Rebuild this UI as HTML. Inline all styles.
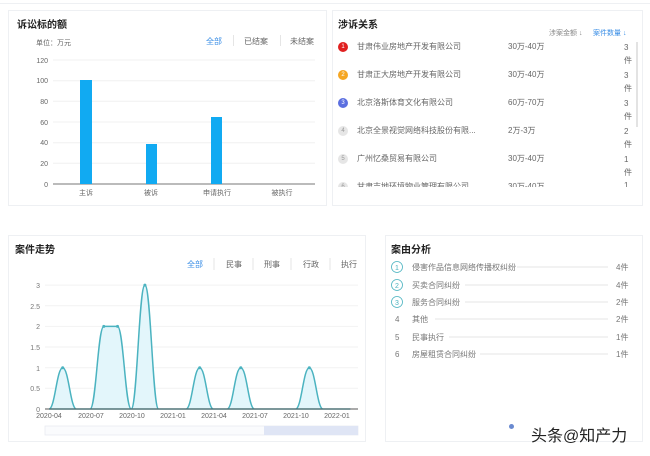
<!DOCTYPE html>
<html><head><meta charset="utf-8"><style>
*{margin:0;padding:0;box-sizing:border-box}
body{width:650px;height:456px;background:#fff;font-family:"Liberation Sans","Noto Sans CJK SC",sans-serif;position:relative;overflow:hidden;color:#555}
.p{position:absolute;border:1px solid #eef0f3;background:#fff}
.t{position:absolute;font-size:10px;font-weight:bold;color:#222}
.s{position:absolute;font-size:8px;color:#666;white-space:nowrap}
.b{color:#3a8ee6}
</style></head><body>
<div style="position:absolute;left:0;top:0;width:650px;height:4px;border-bottom:1px solid #eef0f3"></div>
<div class="p" style="left:8px;top:10px;width:319px;height:196px"></div>
<div class="p" style="left:332px;top:10px;width:311px;height:196px"></div>
<div class="p" style="left:8px;top:235px;width:358px;height:207px"></div>
<div class="p" style="left:385px;top:235px;width:258px;height:207px"></div>

<div class="t" style="left:17px;top:16px">诉讼标的额</div>
<div class="s" style="left:36px;top:38px;font-size:7px">单位：万元</div>
<div class="s b" style="left:206px;top:36px">全部</div>
<div class="s" style="left:244px;top:36px">已结案</div>
<div class="s" style="left:290px;top:36px">未结案</div>
<div style="position:absolute;left:233px;top:35px;width:1px;height:11px;background:#e5e5e5"></div>
<div style="position:absolute;left:280px;top:35px;width:1px;height:11px;background:#e5e5e5"></div>
<svg style="position:absolute;left:0;top:0" width="330" height="210">
<g stroke="#f0f0f0" stroke-width="1"><line x1="53" x2="315" y1="60" y2="60"/><line x1="53" x2="315" y1="80.7" y2="80.7"/><line x1="53" x2="315" y1="101.3" y2="101.3"/><line x1="53" x2="315" y1="122" y2="122"/><line x1="53" x2="315" y1="142.7" y2="142.7"/><line x1="53" x2="315" y1="163.3" y2="163.3"/></g>
<line x1="53" x2="315" y1="184" y2="184" stroke="#777"/>
<g font-size="7" fill="#666" text-anchor="end" font-family="Liberation Sans"><text x="48" y="63">120</text><text x="48" y="83">100</text><text x="48" y="104">80</text><text x="48" y="125">60</text><text x="48" y="145">40</text><text x="48" y="166">20</text><text x="48" y="187">0</text></g>
<rect x="80" y="80" width="12" height="104" fill="#11aaf2"/>
<rect x="146" y="144" width="11" height="40" fill="#11aaf2"/>
<rect x="211" y="117" width="11" height="67" fill="#11aaf2"/>
<g font-size="7" fill="#666" text-anchor="middle" font-family="Liberation Sans,Noto Sans CJK SC"><text x="86" y="195">主诉</text><text x="151" y="195">被诉</text><text x="217" y="195">申请执行</text><text x="282" y="195">被执行</text></g>
</svg>

<div class="t" style="left:338px;top:16px">涉诉关系</div>
<div class="s" style="left:549px;top:28px;font-size:7px;color:#888">涉案金额 ↓</div>
<div class="s b" style="left:593px;top:28px;font-size:7px">案件数量 ↓</div>
<div style="position:absolute;left:636px;top:42px;width:2px;height:85px;background:#e3e3e3"></div>
<div style="position:absolute;left:338px;top:40px;width:296px;height:147px;overflow:hidden">
<div style="position:relative;height:28px"><span style="position:absolute;left:0;top:2px;width:10px;height:10px;border-radius:50%;background:#e02020;color:#fff;font-size:6px;text-align:center;line-height:10px">1</span><span class="s" style="left:19px;top:1px">甘肃伟业房地产开发有限公司</span><span class="s" style="left:170px;top:1px">30万-40万</span><span class="s" style="left:286px;top:1px;line-height:13px">3<br>件</span></div>
<div style="position:relative;height:28px"><span style="position:absolute;left:0;top:2px;width:10px;height:10px;border-radius:50%;background:#f5a623;color:#fff;font-size:6px;text-align:center;line-height:10px">2</span><span class="s" style="left:19px;top:1px">甘肃正大房地产开发有限公司</span><span class="s" style="left:170px;top:1px">30万-40万</span><span class="s" style="left:286px;top:1px;line-height:13px">3<br>件</span></div>
<div style="position:relative;height:28px"><span style="position:absolute;left:0;top:2px;width:10px;height:10px;border-radius:50%;background:#5b6fe0;color:#fff;font-size:6px;text-align:center;line-height:10px">3</span><span class="s" style="left:19px;top:1px">北京洛斯体育文化有限公司</span><span class="s" style="left:170px;top:1px">60万-70万</span><span class="s" style="left:286px;top:1px;line-height:13px">3<br>件</span></div>
<div style="position:relative;height:28px"><span style="position:absolute;left:0;top:2px;width:10px;height:10px;border-radius:50%;background:#e6e6e6;color:#999;font-size:6px;text-align:center;line-height:10px">4</span><span class="s" style="left:19px;top:1px">北京全景视觉网络科技股份有限...</span><span class="s" style="left:170px;top:1px">2万-3万</span><span class="s" style="left:286px;top:1px;line-height:13px">2<br>件</span></div>
<div style="position:relative;height:28px"><span style="position:absolute;left:0;top:2px;width:10px;height:10px;border-radius:50%;background:#e6e6e6;color:#999;font-size:6px;text-align:center;line-height:10px">5</span><span class="s" style="left:19px;top:1px">广州忆桑贸易有限公司</span><span class="s" style="left:170px;top:1px">30万-40万</span><span class="s" style="left:286px;top:1px;line-height:13px">1<br>件</span></div>
<div style="position:relative;height:28px"><span style="position:absolute;left:0;top:2px;width:10px;height:10px;border-radius:50%;background:#e6e6e6;color:#999;font-size:6px;text-align:center;line-height:10px">6</span><span class="s" style="left:19px;top:1px">甘肃吉地环境物业管理有限公司</span><span class="s" style="left:170px;top:1px">30万-40万</span><span class="s" style="left:286px;top:1px">1</span></div>
</div>

<div class="t" style="left:15px;top:241px">案件走势</div>
<div class="s b" style="left:187px;top:259px">全部</div>
<div class="s" style="left:226px;top:259px">民事</div>
<div class="s" style="left:264px;top:259px">刑事</div>
<div class="s" style="left:303px;top:259px">行政</div>
<div class="s" style="left:341px;top:259px">执行</div>
<svg style="position:absolute;left:0;top:0" width="370" height="456">
<g stroke="#e5e5e5"><line x1="214" x2="214" y1="258" y2="270"/><line x1="253" x2="253" y1="258" y2="270"/><line x1="291" x2="291" y1="258" y2="270"/><line x1="330" x2="330" y1="258" y2="270"/></g>
<g stroke="#f2f2f2"><line x1="45" x2="358" y1="285.1" y2="285.1"/><line x1="45" x2="358" y1="305.7" y2="305.7"/><line x1="45" x2="358" y1="326.4" y2="326.4"/><line x1="45" x2="358" y1="347" y2="347"/><line x1="45" x2="358" y1="367.7" y2="367.7"/><line x1="45" x2="358" y1="388.3" y2="388.3"/></g>
<g font-size="7" fill="#777" text-anchor="end" font-family="Liberation Sans"><text x="40" y="288">3</text><text x="40" y="309">2.5</text><text x="40" y="329">2</text><text x="40" y="350">1.5</text><text x="40" y="371">1</text><text x="40" y="391">0.5</text><text x="40" y="412">0</text></g>
<path d="M49,409 C55,409 56.7,367.7 62.7,367.7 C68.7,367.7 70.4,409 76.4,409 L90.1,409 C96.1,409 97.8,326.4 103.8,326.4 L117.5,326.4 C123.5,326.4 125.2,409 131.2,409 C137.2,409 138.9,285.1 144.9,285.1 C150.9,285.1 152.6,409 158.6,409 L186,409 C192,409 193.7,367.7 199.7,367.7 C205.7,367.7 207.4,409 213.4,409 L227.1,409 C233.1,409 234.8,367.7 240.8,367.7 C246.8,367.7 248.5,409 254.5,409 L295.6,409 C301.6,409 303.3,367.7 309.3,367.7 C315.3,367.7 317,409 323,409 L350.4,409 Z" fill="#e3f6fb" stroke="#4bb3c0" stroke-width="1.5"/>
<line x1="45" x2="358" y1="409" y2="409" stroke="#555"/>
<g fill="#4bb3c0"><circle cx="62.7" cy="367.7" r="1.5"/><circle cx="103.8" cy="326.4" r="1.5"/><circle cx="117.5" cy="326.4" r="1.5"/><circle cx="144.9" cy="285.1" r="1.5"/><circle cx="199.7" cy="367.7" r="1.5"/><circle cx="240.8" cy="367.7" r="1.5"/><circle cx="309.3" cy="367.7" r="1.5"/></g>
<g font-size="7" fill="#666" text-anchor="middle" font-family="Liberation Sans"><text x="49" y="418">2020-04</text><text x="91" y="418">2020-07</text><text x="132" y="418">2020-10</text><text x="173" y="418">2021-01</text><text x="214" y="418">2021-04</text><text x="255" y="418">2021-07</text><text x="296" y="418">2021-10</text><text x="337" y="418">2022-01</text></g>
<rect x="45" y="426" width="313" height="9" fill="#fafbfd" stroke="#e6e8ef" stroke-width="0.7"/>
<rect x="264" y="426" width="94" height="9" fill="#dfe5f5"/>
</svg>

<div class="t" style="left:391px;top:241px">案由分析</div>
<svg style="position:absolute;left:385px;top:255px" width="258" height="110">
<g font-size="8" font-family="Liberation Sans,Noto Sans CJK SC" fill="#777">
<circle cx="12" cy="12" r="5.5" fill="none" stroke="#4bb3c0" stroke-width="0.8"/><text x="12" y="15" text-anchor="middle" fill="#4bb3c0" font-size="7">1</text>
<text x="27" y="15">侵害作品信息网络传播权纠纷</text><line x1="132" x2="223" y1="12" y2="12" stroke="#ccc" stroke-width="0.6"/><text x="231" y="15">4件</text>
<circle cx="12" cy="30" r="5.5" fill="none" stroke="#4bb3c0" stroke-width="0.8"/><text x="12" y="33" text-anchor="middle" fill="#4bb3c0" font-size="7">2</text>
<text x="27" y="33">买卖合同纠纷</text><line x1="80" x2="223" y1="30" y2="30" stroke="#ccc" stroke-width="0.6"/><text x="231" y="33">4件</text>
<circle cx="12" cy="47" r="5.5" fill="none" stroke="#4bb3c0" stroke-width="0.8"/><text x="12" y="50" text-anchor="middle" fill="#4bb3c0" font-size="7">3</text>
<text x="27" y="50">服务合同纠纷</text><line x1="80" x2="223" y1="47" y2="47" stroke="#ccc" stroke-width="0.6"/><text x="231" y="50">2件</text>
<text x="10" y="67">4</text><text x="27" y="67">其他</text><line x1="50" x2="223" y1="64" y2="64" stroke="#ccc" stroke-width="0.6"/><text x="231" y="67">2件</text>
<text x="10" y="85">5</text><text x="27" y="85">民事执行</text><line x1="64" x2="223" y1="82" y2="82" stroke="#ccc" stroke-width="0.6"/><text x="231" y="85">1件</text>
<text x="10" y="102">6</text><text x="27" y="102">房屋租赁合同纠纷</text><line x1="95" x2="223" y1="99" y2="99" stroke="#ccc" stroke-width="0.6"/><text x="231" y="102">1件</text>
</g></svg>
<div style="position:absolute;left:509px;top:424px;width:5px;height:5px;border-radius:50%;background:#6a8ad0"></div>
<div style="position:absolute;left:531px;top:422px;font-size:16px;color:#222;font-family:'Liberation Sans','Noto Sans CJK SC',sans-serif;text-shadow:0 0 2px #fff">头条@知产力</div>
</body></html>
